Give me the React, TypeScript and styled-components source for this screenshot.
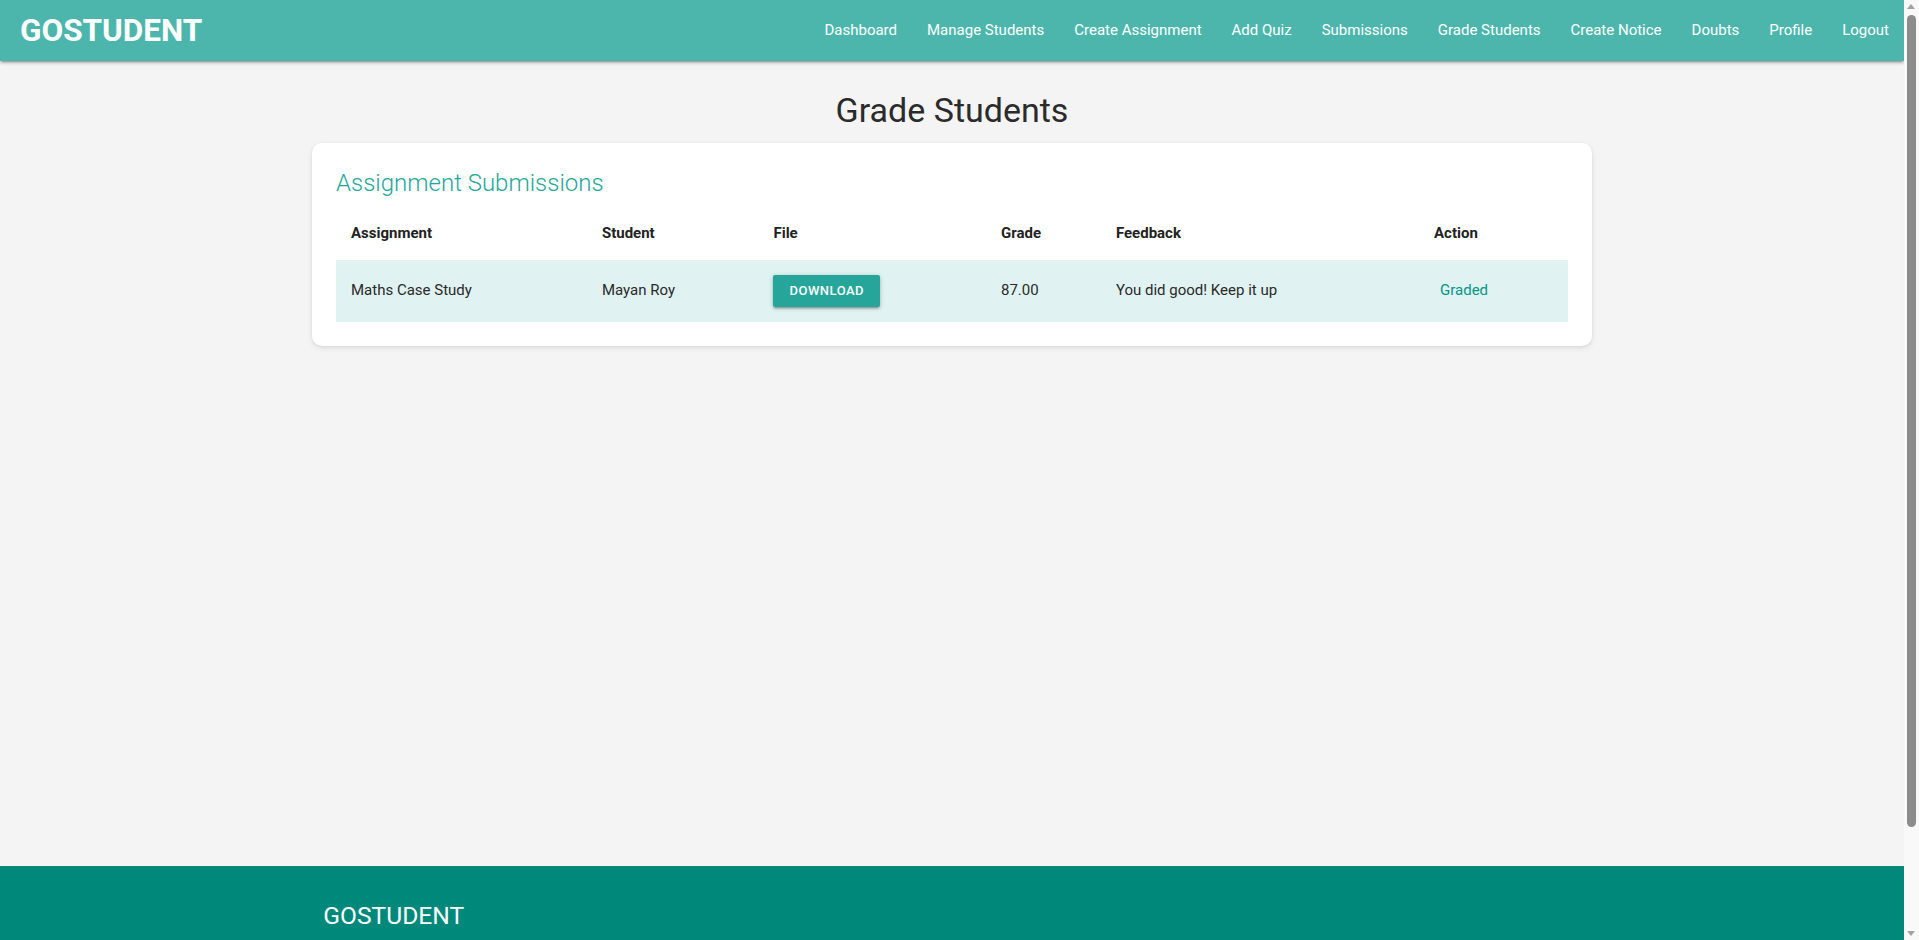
import React from "react";
import styled, { createGlobalStyle } from "styled-components";

const GlobalStyle = createGlobalStyle`
  html { font-size: 15px; }
  * { box-sizing: border-box; }
  body {
    margin: 0;
    background: #f4f4f4;
    font-family: Roboto, "Noto Sans", Arial, sans-serif;
    color: rgba(0, 0, 0, 0.87);
    line-height: 1.5;
  }
`;

const Page = styled.div`
  margin-right: 15px;
`;

const Nav = styled.nav`
  height: 61px;
  line-height: 61px;
  background: #4db6ac;
  color: #fff;
  display: flex;
  align-items: center;
  justify-content: space-between;
  padding-left: 20px;
  box-shadow: 0 2px 2px 0 rgba(0, 0, 0, 0.14), 0 3px 1px -2px rgba(0, 0, 0, 0.12),
    0 1px 5px 0 rgba(0, 0, 0, 0.2);
  position: relative;
  z-index: 2;
`;

const Brand = styled.a`
  font-size: 31.5px;
  font-weight: 700;
  color: #fff;
  text-decoration: none;
  white-space: nowrap;
`;

const NavList = styled.ul`
  display: flex;
  list-style: none;
  margin: 0;
  padding: 0;
`;

const NavLink = styled.a`
  display: block;
  padding: 0 15px;
  font-size: 15px;
  color: #fff;
  text-decoration: none;
  white-space: nowrap;
`;

const Main = styled.main`
  min-height: 805px;
  padding-top: 29px;
`;

const Container = styled.div`
  max-width: 1280px;
  width: 70%;
  margin: 0 auto;
`;

const PageTitle = styled.h4`
  margin: 0 0 13px;
  text-align: center;
  font-size: 34px;
  font-weight: 400;
  line-height: 40px;
  color: #2b2b2b;
`;

const Card = styled.div`
  background: #fff;
  border-radius: 10px;
  padding: 24px;
  box-shadow: 0 2px 6px 0 rgba(0, 0, 0, 0.08), 0 1px 3px 0 rgba(0, 0, 0, 0.06);
`;

const CardTitle = styled.span`
  display: block;
  font-size: 24px;
  font-weight: 300;
  line-height: 32px;
  margin-bottom: 8px;
  color: #26a69a;
`;

const Table = styled.table`
  width: 100%;
  border-collapse: collapse;
  table-layout: fixed;
`;

const HeadCell = styled.th`
  padding: 15px;
  text-align: left;
  font-size: 15px;
  font-weight: 700;
  line-height: 22.5px;
  color: #222;
`;

const Row = styled.tr<{ $highlight?: boolean }>`
  background: ${(p) => (p.$highlight ? "#e0f2f1" : "transparent")};
`;

const Cell = styled.td`
  padding: 15px;
  font-size: 15px;
  line-height: 22.5px;
  vertical-align: middle;
  color: #2a2a2a;
`;

const Button = styled.a`
  display: inline-block;
  height: 32.4px;
  line-height: 32.4px;
  padding: 0 16px;
  background: #26a69a;
  color: #fff;
  font-size: 13px;
  font-weight: 500;
  letter-spacing: 0.5px;
  text-transform: uppercase;
  border-radius: 2px;
  text-decoration: none;
  box-shadow: 0 2px 2px 0 rgba(0, 0, 0, 0.14), 0 3px 1px -2px rgba(0, 0, 0, 0.12),
    0 1px 5px 0 rgba(0, 0, 0, 0.2);
`;

const Status = styled.span`
  padding-left: 6px;
  color: #009688;
`;

const Footer = styled.footer`
  background: #00897b;
  color: #fff;
  padding-top: 20px;
`;

const FooterInner = styled.div`
  max-width: 1280px;
  width: 70%;
  margin: 0 auto;
  padding: 0 11.25px 20px;
`;

const FooterTitle = styled.h5`
  margin: 16.4px 0 9.84px;
  font-size: 24.6px;
  font-weight: 400;
  line-height: 110%;
`;

const FooterText = styled.p`
  margin: 0;
  font-size: 15px;
  color: #e0e0e0;
`;

const Copyright = styled.div`
  background: rgba(51, 51, 51, 0.08);
  height: 60px;
  line-height: 60px;
  font-size: 14px;
  color: rgba(255, 255, 255, 0.8);
`;

/* Window scrollbar, drawn over the right edge of the viewport */
const Scrollbar = styled.div`
  position: fixed;
  top: 0;
  right: 0;
  width: 15px;
  height: 100vh;
  background: #f9f9f9;
  z-index: 10;
`;

const Arrow = styled.div<{ $down?: boolean }>`
  position: absolute;
  left: 3px;
  ${(p) => (p.$down ? "bottom: 4px;" : "top: 4px;")}
  width: 0;
  height: 0;
  border-left: 4.5px solid transparent;
  border-right: 4.5px solid transparent;
  ${(p) =>
    p.$down ? "border-top: 5px solid #a3a3a3;" : "border-bottom: 5px solid #a3a3a3;"}
`;

const Thumb = styled.div`
  position: absolute;
  top: 15px;
  left: 3px;
  width: 9px;
  height: 812px;
  border-radius: 5px;
  background: #8c8c8c;
`;

const columns = [20.37, 13.92, 18.47, 9.33, 25.82, 12.09];
const links = [
  "Dashboard",
  "Manage Students",
  "Create Assignment",
  "Add Quiz",
  "Submissions",
  "Grade Students",
  "Create Notice",
  "Doubts",
  "Profile",
  "Logout",
];

export default function App() {
  return (
    <>
      <GlobalStyle />
      <Page>
        <Nav>
          <Brand href="#">GOSTUDENT</Brand>
          <NavList>
            {links.map((l) => (
              <li key={l}>
                <NavLink href="#">{l}</NavLink>
              </li>
            ))}
          </NavList>
        </Nav>
        <Main>
          <Container>
            <PageTitle>Grade Students</PageTitle>
            <Card>
              <CardTitle>Assignment Submissions</CardTitle>
              <Table>
                <colgroup>
                  {columns.map((w, i) => (
                    <col key={i} style={{ width: `${w}%` }} />
                  ))}
                </colgroup>
                <thead>
                  <tr>
                    <HeadCell>Assignment</HeadCell>
                    <HeadCell>Student</HeadCell>
                    <HeadCell>File</HeadCell>
                    <HeadCell>Grade</HeadCell>
                    <HeadCell>Feedback</HeadCell>
                    <HeadCell>Action</HeadCell>
                  </tr>
                </thead>
                <tbody>
                  <Row $highlight>
                    <Cell>Maths Case Study</Cell>
                    <Cell>Mayan Roy</Cell>
                    <Cell>
                      <Button href="#">Download</Button>
                    </Cell>
                    <Cell>87.00</Cell>
                    <Cell>You did good! Keep it up</Cell>
                    <Cell>
                      <Status>Graded</Status>
                    </Cell>
                  </Row>
                </tbody>
              </Table>
            </Card>
          </Container>
        </Main>
        <Footer>
          <FooterInner>
            <FooterTitle>GOSTUDENT</FooterTitle>
            <FooterText>Learning made simple for teachers and students.</FooterText>
          </FooterInner>
          <Copyright>
            <FooterInner>© 2024 GoStudent</FooterInner>
          </Copyright>
        </Footer>
      </Page>
      <Scrollbar>
        <Arrow />
        <Thumb />
        <Arrow $down />
      </Scrollbar>
    </>
  );
}
